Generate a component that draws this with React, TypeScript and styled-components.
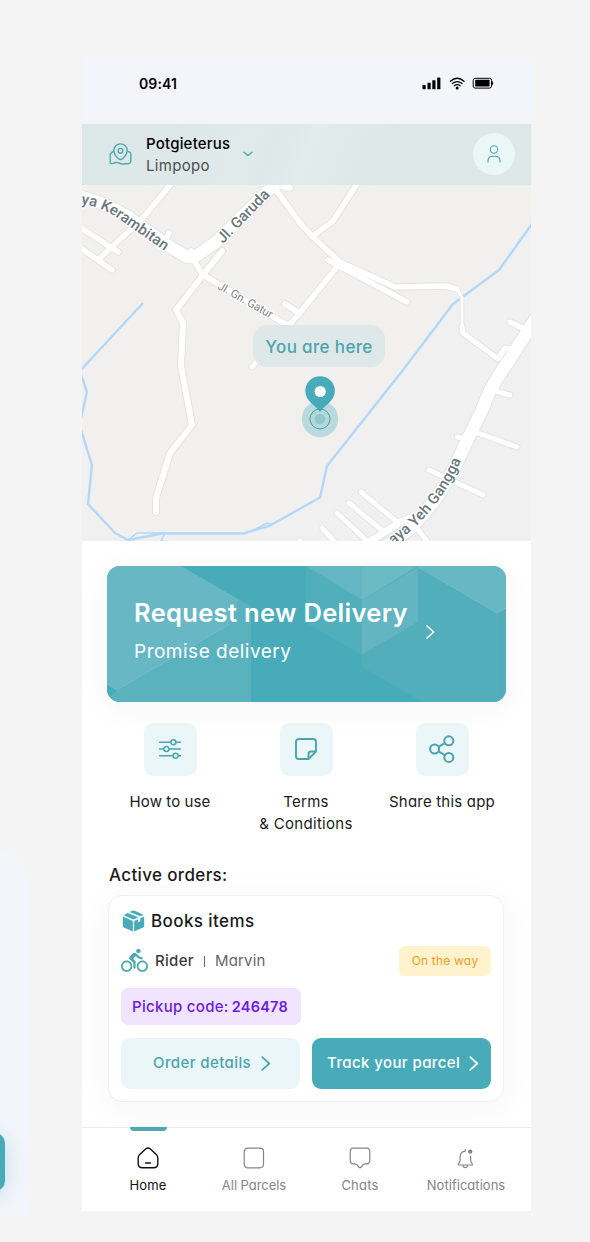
import React from "react";
import styled, { createGlobalStyle, css } from "styled-components";
import { MdDirectionsBike } from "react-icons/md";

const teal = "#47abb9";
const tealText = "#4aa5ad";

const GlobalStyle = createGlobalStyle`
  * { box-sizing: border-box; }
  body {
    margin: 0;
    background: #f4f4f4;
    font-family: Inter, "Liberation Sans", sans-serif;
    font-feature-settings: "cv11" 1;
  }
`;

const Page = styled.main`
  position: relative;
  width: 590px;
  height: 1242px;
  padding: 56px 0 0 82px;
  overflow: hidden;
  background: #f4f4f4;
`;

const NeighbourScreen = styled.div`
  position: absolute;
  left: -371px;
  top: 847px;
  width: 400px;
  height: 370px;
  border-radius: 0 40px 0 0;
  background: #f4f5fb;
  overflow: hidden;
`;

const NeighbourButton = styled.div`
  width: 370px;
  height: 58px;
  margin: 286px 0 0 6px;
  border-radius: 10px;
  background: ${teal};
  box-shadow: 0 4px 22px rgba(71, 171, 200, 0.3);
`;

const Phone = styled.section`
  display: flex;
  flex-direction: column;
  width: 449px;
  height: 1155px;
  background: #fff;
`;

const StatusBar = styled.header`
  display: flex;
  justify-content: space-between;
  height: 68px;
  padding: 18px 37px 0 57px;
  background: #f4f5fb;
`;

interface TextProps {
  $size: number;
  $line?: number;
  $weight?: number;
  $color?: string;
  $track?: number;
}

const Text = styled.span<TextProps>`
  display: block;
  white-space: nowrap;
  font-size: ${(p) => p.$size}px;
  line-height: ${(p) => p.$line ?? 22}px;
  font-weight: ${(p) => p.$weight ?? 400};
  color: ${(p) => p.$color ?? "#1b1b1b"};
  letter-spacing: ${(p) => p.$track ?? 0}px;
`;

const StatusIcons = styled.div`
  display: flex;
  height: 19px;
  align-items: center;
`;

const LocationBar = styled.div`
  display: flex;
  align-items: center;
  height: 61px;
  padding: 0 16px 0 27px;
  background: linear-gradient(112deg, #dce7e7 0%, #dee8e8 25%, #e0eaea 38%, #dde8e8 42%, #e3ecec 50%, #dfe9e9 58%, #dde7e7 72%, #dfe8e8 100%);
`;

const Place = styled.div`
  width: 84px;
  margin: 0 13px 0 14px;
  padding-top: 1px;
`;

const Avatar = styled.div`
  display: grid;
  place-items: center;
  width: 42px;
  height: 42px;
  margin-left: auto;
  border-radius: 50%;
  background: #ebf6f7;
`;

const MapArea = styled.div`
  position: relative;
  height: 356px;
  overflow: hidden;
  background: #f1f0ef;

  > svg { display: block; }
`;

const HereLabel = styled.div`
  position: absolute;
  left: 171px;
  top: 140px;
  display: grid;
  place-items: center;
  width: 132px;
  height: 42px;
  padding-top: 2px;
  border-radius: 14px;
  background: #dfe8e8;
`;

const Content = styled.div`
  display: flex;
  flex-direction: column;
  height: 587px;
  padding: 25px 25px 0;
  background: #fff;
`;

const Banner = styled.div`
  position: relative;
  width: 399px;
  height: 136px;
  border-radius: 13px;
  overflow: hidden;
  background: ${teal};
`;

const BannerShadow = styled.div`
  width: 399px;
  border-radius: 13px;
  box-shadow: 0 6px 34px rgba(0, 0, 0, 0.045);
`;

const BannerContent = styled.div`
  position: absolute;
  inset: 0;
  display: flex;
  padding: 30px 0 0 27px;
`;

const BannerCopy = styled.div`
  display: flex;
  flex-direction: column;
  gap: 7px;
  width: 292px;
`;

const BannerChevron = styled.div`
  padding-top: 28px;
`;

const Actions = styled.div`
  display: grid;
  grid-template-columns: repeat(3, 136px);
  margin: 21px 0 0 -5px;
  height: 111px;
`;

const Action = styled.div`
  display: flex;
  flex-direction: column;
  align-items: center;
  gap: 15px;
  text-align: center;
`;

const ActionTile = styled.div`
  display: grid;
  place-items: center;
  width: 53px;
  height: 53px;
  border-radius: 9px;
  background: #ebf6f8;
`;

const SectionTitle = styled.div`
  margin: 31px 0 9px 2px;
`;

const OrderCard = styled.article`
  width: 396px;
  height: 207px;
  margin-left: 1px;
  padding: 13px 12px 12px;
  border: 1px solid #f0f0f0;
  border-radius: 14px;
  background: #fff;
  box-shadow: 0 6px 36px rgba(0, 0, 0, 0.045);
`;

const Row = styled.div<{ $height: number; $top?: number; $gap?: number }>`
  display: flex;
  align-items: center;
  gap: ${(p) => p.$gap ?? 0}px;
  height: ${(p) => p.$height}px;
  margin-top: ${(p) => p.$top ?? 0}px;
`;

const Divider = styled.i`
  width: 1px;
  height: 11px;
  margin: 1px 3px 0 3px;
  background: #666;
`;

const StatusTag = styled.div`
  display: grid;
  place-items: center;
  width: 92px;
  height: 30px;
  margin-left: auto;
  border-radius: 6px;
  background: #fff3cd;
`;

const PickupTag = styled.div`
  display: flex;
  align-items: center;
  gap: 3px;
  width: 180px;
  height: 37px;
  padding: 1px 0 0 11px;
  border-radius: 7px;
  background: #f1e4ff;
`;

const ButtonRow = styled.div`
  display: flex;
  gap: 12px;
  margin-top: 13px;
`;

const OrderButton = styled.button<{ $primary?: boolean }>`
  display: flex;
  align-items: center;
  justify-content: space-between;
  width: 179.5px;
  height: 51px;
  padding: 0 29px 0 32px;
  border: 0;
  border-radius: 9px;
  font-family: inherit;
  font-feature-settings: inherit;
  background: #ebf6f8;
  color: ${tealText};
  ${(p) =>
    p.$primary &&
    css`
      padding: 0 12px 0 15px;
      background: ${teal};
      color: #fff;
    `}
`;

const TabBar = styled.nav`
  display: grid;
  grid-template-columns: repeat(4, 106px);
  height: 84px;
  padding-left: 13px;
  border-top: 1px solid #ebebeb;
  background: #fff;
`;

const Tab = styled.div`
  display: flex;
  flex-direction: column;
  align-items: center;
  gap: 7px;
`;

const TabMarker = styled.div<{ $active?: boolean }>`
  width: 37px;
  height: 4px;
  margin: -1px 0 9px;
  border-radius: 0 0 4px 4px;
  background: ${(p) => (p.$active ? "#4fa9b0" : "transparent")};
`;

const Chevron = ({ w = 9, h = 14, color = "currentColor", stroke = 1.6 }) => (
  <svg width={w} height={h} viewBox="0 0 9 14" fill="none" stroke={color} strokeWidth={stroke} strokeLinecap="round" strokeLinejoin="round">
    <path d="M1 1l6.6 6L1 13" />
  </svg>
);

const roads: Array<[string, number]> = [
  ["M171 184L142 219L100 258", 5.6],
  ["M78 226L118 252", 5.6],
  ["M78 246L112 270", 5.6],
  ["M169 233L164 243", 5.6],
  ["M191 251L189 258", 5.6],
  ["M272 184L290 188", 5.6],
  ["M274 187L300 223L313 237L340 262L395 287L445 286L457 289", 5.6],
  ["M457 289L462 298V327", 2.8],
  ["M462 327L463 333L498 359L505 348L510 349", 5.2],
  ["M357 184L333 221L313 236", 5.6],
  ["M328 260L407 302", 5.4],
  ["M337 267L298 315L252 367", 5.6],
  ["M285 304L298 312", 5.6],
  ["M191 256L203 275L287 325", 5.6],
  ["M222 251L203 275L176 310L183 323L181 366L192 425L170 453L156 498V512", 6],
  ["M510 322L524 329", 5.4],
  ["M495 391L510 395", 5],
  ["M457 437L467 439", 5],
  ["M475 432L517 447", 5],
  ["M429 470L483 495", 5],
  ["M361 492L396 521", 5],
  ["M349 503L383 531", 5],
  ["M337 513L366 540", 5],
  ["M322 528L336 543", 5],
  ["M300 541L304 545", 5],
  ["M410 518L402 521L366 544", 7],
  ["M412 522L430 545", 5],
  ["M78 196Q105 202 130 218L167 245L187 257Q193 259 202 252L216 242L276 183", 12],
  ["M535 320L500 374Q489 390 482 410L464 447Q448 484 430 506Q414 529 386 546", 12.5],
];

const MapView = () => (
  <svg width="449" height="356" viewBox="82 185 449 356">
    <rect x="82" y="185" width="449" height="356" fill="#f1f0ef" />
    <path d="M531 225L499 270L453 304L403 370L327 466L320 497L270 525L243 533L162 533L128 540L115 533L88 504L92 465L82 433V541H531Z" fill="#f0f0f0" />
    <g fill="none" stroke="#b3d7fa" strokeWidth="2.4" strokeLinejoin="round">
      <path d="M143 303L80 371" />
      <path d="M80 372L87 392L81 418" />
      <path d="M80 427L92 465L88 504L115 533L128 540L162 533.5H243L270 525.5L320 497.5L327 466L403 370L453 304L499 270L532 224" />
      <path d="M128 540L137 533H165L160 543M250 532L267 523L272 524" strokeWidth="1.5" />
    </g>
    <g fill="none" strokeLinecap="round" strokeLinejoin="round">
      {roads.map(([d, w]) => <path key={d} d={d} stroke="#e3e2e1" strokeWidth={w + 1.8} />)}
      {roads.map(([d, w]) => <path key={d} d={d} stroke="#fff" strokeWidth={w} />)}
    </g>
    <defs>
      <path id="kerambitan" d="M81 204Q102 206 123 222L176 259" />
      <path id="garuda" d="M223 244L283 182" />
      <path id="gatur" d="M217 288.5L287 328" />
      <path id="gangga" d="M393 545Q446 507 467 445" />
    </defs>
    <g fontFamily="Roboto, sans-serif" fontSize="15" fontWeight="500" fill="#69767c" stroke="#fff" strokeWidth="2.5" strokeLinejoin="round" paintOrder="stroke">
      <text><textPath href="#kerambitan" textLength="97">ya Kerambitan</textPath></text>
      <text><textPath href="#garuda" textLength="68">Jl. Garuda</textPath></text>
      <text><textPath href="#gangga" textLength="110">aya Yeh Gangga</textPath></text>
      <text fontSize="11.5" fontWeight="400" fill="#7c8285"><textPath href="#gatur" textLength="61">Jl. Gn. Gatur</textPath></text>
    </g>
    <circle cx="320" cy="419" r="18.2" fill="#b9dbdd" />
    <circle cx="320" cy="419" r="10" fill="#b4d8db" stroke="#4b9ea7" strokeWidth="1" />
    <circle cx="320" cy="419" r="5.3" fill="#91c6ca" />
    <path d="M320 412C316 406 305.3 401 305.3 391A14.8 14.8 0 0 1 334.9 391C334.9 401 324 406 320 412Z" fill={teal} />
    <circle cx="320.2" cy="391.5" r="5.6" fill="#fff" />
  </svg>
);

const BannerPattern = () => (
  <svg width="399" height="136" viewBox="107 566 399 136" style={{ display: "block" }}>
    <path d="M107 566H181L239 599.5L228 625L117 690L107 684Z" fill="#67b7c4" />
    <path d="M239 599.5L251 606V702H107V700L117 690L228 625Z" fill="#5bb2bf" />
    <path d="M107 684L117 690L107 700Z" fill={teal} />
    <path d="M107 684L117 690L230 624" fill="none" stroke="#75bec9" strokeWidth="1" />
    <path d="M306 566V623L362 655V600Z" fill="#51aebb" />
    <path d="M306 566H362V600Z" fill="#63b6c2" />
    <path d="M362 566H418L362 600Z" fill="#6bbac4" />
    <path d="M418 567V622L362 655V600Z" fill="#62b5c1" />
    <path d="M418 567L497 613L506 608V702H422L362 667V655L418 622Z" fill="#52aebb" />
    <path d="M417 566H506V608L497 613Z" fill="#67b7c4" />
    <path d="M418 567L497 613L506 608" fill="none" stroke="#73bdc8" strokeWidth="1" />
    <path d="M497 613V702" stroke="#5ab1be" strokeWidth="1" />
  </svg>
);

const HomeIcon = () => (
  <svg width="22" height="22" viewBox="0 0 22 22" fill="none" stroke="#111" strokeWidth="1.4" strokeLinecap="round" strokeLinejoin="round">
    <path d="M8.9 1.8Q11 .1 13.1 1.8L19.5 7.8Q20.8 9 20.8 11V16.5Q20.8 20.8 16.5 20.8H5.5Q1.2 20.8 1.2 16.5V11Q1.2 9 2.5 7.8Z" />
    <path d="M8.6 16H13.4" />
  </svg>
);

const ParcelsIcon = () => (
  <svg width="22" height="22" viewBox="0 0 22 22" fill="none" stroke="#858585" strokeWidth="1.2">
    <rect x="1.2" y="1.2" width="19.3" height="19.6" rx="3.5" />
  </svg>
);

const ChatIcon = () => (
  <svg width="22" height="22" viewBox="0 0 22 22" fill="none" stroke="#858585" strokeWidth="1.2" strokeLinejoin="round">
    <path d="M4.5 1.2H17.5Q20.8 1.2 20.8 4.5V13.5Q20.8 16.8 17.5 16.8H16.2Q15 16.8 14.2 17.7L12.2 20Q11 21.3 9.8 20L7.8 17.7Q7 16.8 5.8 16.8H4.5Q1.2 16.8 1.2 13.5V4.5Q1.2 1.2 4.5 1.2Z" />
  </svg>
);

const BellIcon = () => (
  <svg width="22" height="22" viewBox="0 0 22 22" fill="none" stroke="#858585" strokeWidth="1.2" strokeLinecap="round" strokeLinejoin="round">
    <path d="M10.3 4.1Q5.3 4.6 5.1 10V13Q5.1 15.3 3.7 16.3Q2.8 17.8 3.5 18H17.3Q17.8 17.8 16.9 16.3Q15.6 15 15.6 13V9M10.3 4.1V2.5M8 18.2Q8.3 20.7 10.3 20.7T12.6 18.2" />
    <circle cx="15.2" cy="4.6" r="2.2" fill="#858585" stroke="none" />
  </svg>
);

const actions = [
  {
    label: ["How to use"],
    track: 0.1,
    icon: (
      <svg width="24" height="24" viewBox="0 0 24 24" fill="none" stroke={tealText} strokeWidth="1.4" strokeLinecap="round">
        <path d="M1.5 5.2H12.6M18.2 5.2H22.5M1.5 12H5.6M11.2 12H22.5M1.5 18.8H14.8M20.4 18.8H22.5" />
        <circle cx="15.4" cy="5.2" r="2.5" />
        <circle cx="8.4" cy="12" r="2.5" />
        <circle cx="17.6" cy="18.8" r="2.5" />
      </svg>
    ),
  },
  {
    label: ["Terms", "& Conditions"],
    track: 0.3,
    icon: (
      <svg width="24" height="24" viewBox="0 0 24 24" fill="none" stroke={tealText} strokeWidth="1.9" strokeLinejoin="round">
        <path d="M4.4 2H19.2Q22 2 22 4.8V14.5L14.5 22H4.8Q2 22 2 19.2V4.8Q2 2 4.8 2" />
        <path d="M22 14.5H17Q14.5 14.5 14.5 17V22" />
      </svg>
    ),
  },
  {
    label: ["Share this app"],
    track: 0.2,
    icon: (
      <svg width="28" height="28" viewBox="0 0 28 28" fill="none" stroke={tealText} strokeWidth="2">
        <circle cx="20.8" cy="5.8" r="4.5" />
        <circle cx="6.6" cy="14" r="4.5" />
        <circle cx="20.8" cy="22.4" r="4.5" />
        <path d="M10.5 11.8L16.8 8.1M10.5 16.3L16.8 20.1" />
      </svg>
    ),
  },
];

const tabs = [
  { label: "Home", icon: <HomeIcon />, active: true, track: 0.2 },
  { label: "All Parcels", icon: <ParcelsIcon />, active: false, track: -0.05 },
  { label: "Chats", icon: <ChatIcon />, active: false, track: 0.2 },
  { label: "Notifications", icon: <BellIcon />, active: false, track: 0.03 },
];

export default function App() {
  return (
    <>
      <GlobalStyle />
      <Page>
        <NeighbourScreen>
          <NeighbourButton />
        </NeighbourScreen>
        <Phone>
          <StatusBar>
            <Text $size={14} $line={19} $weight={600} $color="#000" $track={0.1}>09:41</Text>
            <StatusIcons>
              <svg width="74" height="19" viewBox="0 0 74 19">
                <g fill="#000">
                  <rect x="2.5" y="11" width="3.2" height="4.2" rx=".4" />
                  <rect x="7.5" y="8.7" width="3.2" height="6.5" rx=".4" />
                  <rect x="12.3" y="6.2" width="3.2" height="9" rx=".4" />
                  <rect x="17.2" y="3.6" width="3.2" height="11.6" rx=".4" />
                  <circle cx="37.2" cy="13.9" r="1.5" />
                  <rect x="55.2" y="5.8" width="14.4" height="6.8" rx=".6" />
                  <path d="M72 6.8Q74.2 9.2 72 11.6Z" />
                </g>
                <g fill="none" stroke="#000">
                  <path d="M30.4 7.3Q37.2 1.3 44 7.3M32.4 9.6Q37.2 5.6 42 9.6M34.3 11.8Q37.2 9.6 40.1 11.8" strokeWidth="1.3" strokeLinecap="round" />
                  <rect x="53.2" y="4.3" width="18.3" height="9.8" rx="2" strokeWidth="1" />
                </g>
              </svg>
            </StatusIcons>
          </StatusBar>
          <LocationBar>
            <svg width="23" height="22" viewBox="0 0 23 22" fill="none" stroke="#4fa9b0" strokeWidth="1.4" strokeLinejoin="round" strokeLinecap="round">
              <path d="M9.3 15.6Q4.8 11.4 4.8 7.6A6.7 6.7 0 0 1 18.2 7.6Q18.2 11.4 13.7 15.6Q11.5 17.4 9.3 15.6Z" />
              <circle cx="11.5" cy="7.8" r="2.4" />
              <path d="M4.4 8.4Q1.2 9.8 1.2 12.3V18.7Q1.2 21.3 4 20.4Q7 19 9.5 19.8Q12.5 21.4 15.5 20.8H18.5Q21.8 20.8 21.8 17.5V11Q21.8 8.8 18.9 8.4" />
            </svg>
            <Place>
              <Text $size={15} $weight={500} $color="#000" $track={0.2}>Potgieterus</Text>
              <Text $size={15} $color="#4a4f50" $track={0.3}>Limpopo</Text>
            </Place>
            <svg width="10" height="6" viewBox="0 0 10 6" fill="none" stroke="#4fa9b8" strokeWidth="1.4" strokeLinecap="round" strokeLinejoin="round"><path d="M1 1.2L5 4.6L9 1.2" /></svg>
            <Avatar>
              <svg width="14" height="18" viewBox="0 0 14 18" fill="none" stroke={tealText} strokeWidth="1.1" strokeLinecap="round">
                <circle cx="7" cy="4.5" r="3.7" />
                <path d="M1 17V15.5Q1.4 11.2 5.5 11.2H8.5Q12.6 11.2 13 15.5V17" />
              </svg>
            </Avatar>
          </LocationBar>
          <MapArea>
            <MapView />
            <HereLabel>
              <Text $size={17} $weight={500} $color={tealText} $track={0.35}>You are here</Text>
            </HereLabel>
          </MapArea>
          <Content>
            <BannerShadow>
              <Banner>
                <BannerPattern />
                <BannerContent>
                  <BannerCopy>
                    <Text $size={25.5} $line={34} $weight={600} $color="#fff" $track={0.32}>Request new Delivery</Text>
                    <Text $size={19} $line={30} $weight={400} $color="#fff" $track={0.5}>Promise delivery</Text>
                  </BannerCopy>
                  <BannerChevron><Chevron h={16} color="#fff" /></BannerChevron>
                </BannerContent>
              </Banner>
            </BannerShadow>
            <Actions>
              {actions.map((a) => (
                <Action key={a.label[0]}>
                  <ActionTile>{a.icon}</ActionTile>
                  <div>
                    {a.label.map((line) => <Text key={line} $size={15} $track={a.track}>{line}</Text>)}
                  </div>
                </Action>
              ))}
            </Actions>
            <SectionTitle>
              <Text $size={17} $line={21} $weight={500} $track={0.35}>Active orders:</Text>
            </SectionTitle>
            <OrderCard>
              <Row $height={24} $gap={5}>
                <svg width="25" height="24" viewBox="0 0 25 24" fill={teal}>
                  <path d="M1.8 7.6L11.9 12V22.5L3.1 18.5Q1.8 17.8 1.8 16.5Z" />
                  <path d="M23.2 7.6L13.1 12V22.5L21.9 18.5Q23.2 17.8 23.2 16.5Z" />
                  <path d="M7.7 3.4L11.3 1.7Q12.5 1.2 13.7 1.7L22.5 5.7L19.3 7.2L8.5 2.9ZM6.5 3.9L17.4 8.2L12.5 10.6L2.5 6.2Z" />
                  <path d="M17.1 9.4L19.2 8.4V12.2L17.1 13.2Z" fill="#fff" />
                </svg>
                <Text $size={17} $weight={500} $track={0.4}>Books items</Text>
              </Row>
              <Row $height={30} $top={13} $gap={7}>
                <MdDirectionsBike size={27} color="#4aa9b3" />
                <Text $size={15} $weight={500} $color="#3b3b3b" $track={0.3}>Rider</Text>
                <Divider />
                <Text $size={15} $color="#666" $track={0.2}>Marvin</Text>
                <StatusTag><Text $size={12} $color="#f39a1f" $track={0.2}>On the way</Text></StatusTag>
              </Row>
              <Row $height={37} $top={12}>
                <PickupTag>
                  <Text $size={15} $weight={500} $color="#6a1be0" $track={0.3}>Pickup code:</Text>
                  <Text $size={14.5} $weight={600} $color="#6a1be0" $track={0.25}>246478</Text>
                </PickupTag>
              </Row>
              <ButtonRow>
                <OrderButton>
                  <Text $size={15} $weight={500} $color={tealText} $track={0.4}>Order details</Text>
                  <Chevron w={10} h={15} />
                </OrderButton>
                <OrderButton $primary>
                  <Text $size={15} $weight={500} $color="#fff" $track={0.4}>Track your parcel</Text>
                  <Chevron w={10} h={15} />
                </OrderButton>
              </ButtonRow>
            </OrderCard>
          </Content>
          <TabBar>
            {tabs.map((t) => (
              <Tab key={t.label}>
                <TabMarker $active={t.active} />
                {t.icon}
                <Text $size={13} $line={18} $color={t.active ? "#111" : "#858585"} $track={t.track}>{t.label}</Text>
              </Tab>
            ))}
          </TabBar>
        </Phone>
      </Page>
    </>
  );
}
